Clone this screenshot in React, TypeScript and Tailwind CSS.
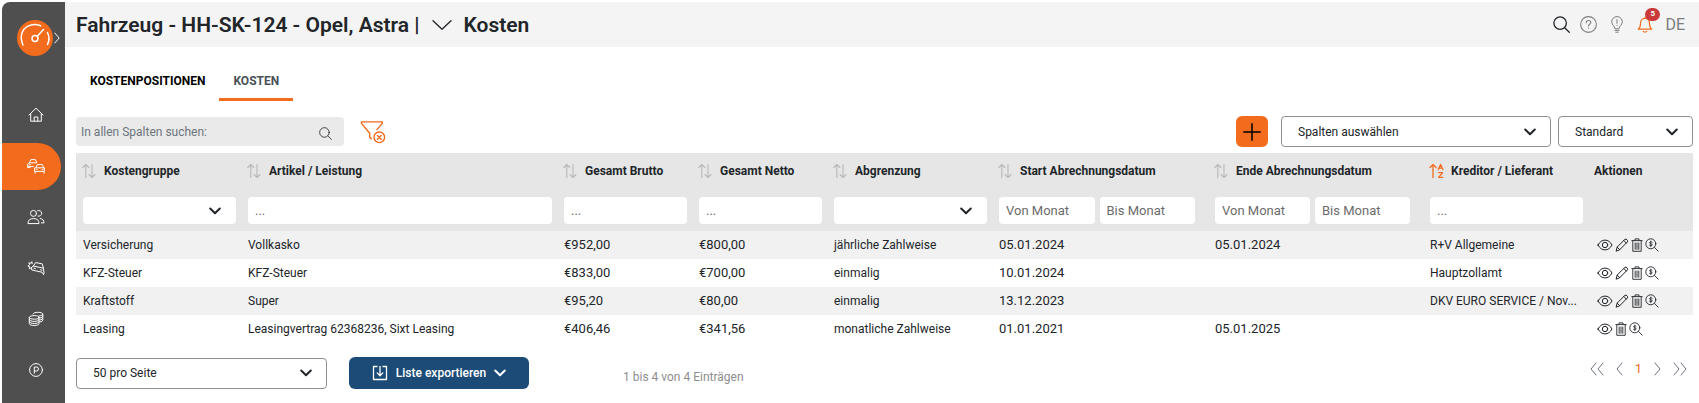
import type { ReactNode, SVGProps } from "react";
import clsx from "clsx";

function Icon({ children, ...props }: SVGProps<SVGSVGElement>) {
    return (
        <svg fill="none" stroke="currentColor" strokeLinecap="round" strokeLinejoin="round" aria-hidden="true" {...props}>
            {children}
        </svg>
    );
}

const HomeIcon = () => (
    <Icon viewBox="0 0 16 16" className="h-4 w-4">
        <path d="M1 8 8 1.2 15 8M2.7 6.6v7.6h10.6V6.6M6.2 14v-4h3.6v4" />
    </Icon>
);

const CarsIcon = () => (
    <Icon viewBox="0 0 18 16" className="h-4 w-[18px]">
        <path d="M2.5 4.800 3.8 1.600h4.600L9.600 4.300M.8 9.5V5.800l1.700-1H9.500M.8 8.400h5.700M1.200 9.600h2M2.500 6.600h.8" />
        <path d="M9 9.800 10.200 6.600h5.200l1.200 3.200M8 9.800h9.300v3.600H8zM8.200 13.600v1.600M17 13.600v1.600M9.600 11.600h.8M15 11.600h.8" />
    </Icon>
);

const UsersIcon = () => (
    <Icon viewBox="0 0 18 16" className="h-4 w-[18px]">
        <circle cx="6.5" cy="4.4" r="3" />
        <path d="M1 14.2c0-3.2 2-4.6 5.5-4.6s5.5 1.4 5.5 4.6zM10.6 1.7a2.9 2.9 0 1 1 .3 5.4M13.2 9.5c2.4.4 3.8 1.8 3.8 4.4h-2.6" />
    </Icon>
);

const DamageIcon = () => (
    <Icon viewBox="0 0 18 16" className="h-4 w-[18px]">
        <path d="m5.2 3.6-.4-2-1 1.8-2-.6.8 1.9L.9 6l1.8.8-.4 2 1.9-1" />
        <path d="M6.2 6.2 8.6 2.6l6.6 1.2 1.2 4M4.8 7.2 6.4 6l10 2.2.6 4.6-.4 1.800-1.6-2.400-9.8-2.100zM7 8.2l1.4.4M13.6 9.8l1.4.4" />
    </Icon>
);

const CoinsIcon = () => (
    <Icon viewBox="0 0 16 16" className="h-4 w-4">
        <ellipse cx="6.2" cy="6.4" rx="4.9" ry="1.8" />
        <path d="M1.3 6.4v6.2c0 1 2.2 1.9 4.9 1.9s4.9-.9 4.9-1.9V6.4M1.3 8.5c0 1 2.2 1.9 4.9 1.9s4.9-.9 4.9-1.9M1.3 10.6c0 1 2.2 1.9 4.9 1.9s4.9-.9 4.9-1.9" />
        <path d="M5 3c.3-1 2.3-1.7 4.9-1.7 2.7 0 4.9.8 4.9 1.8s-2 1.8-3.700 1.900M14.800 3.200v6c0 .8-1.200 1.400-2.600 1.700M14.800 5.200c0 .8-1.200 1.400-2.600 1.700M14.800 7.200c0 .8-1.200 1.400-2.600 1.700" />
    </Icon>
);

const ParkingIcon = () => (
    <Icon viewBox="0 0 16 16" className="h-4 w-4">
        <circle cx="8" cy="8" r="6.4" />
        <path d="M6.3 11.300V5h2.200a2 2 0 0 1 0 4H6.500" />
    </Icon>
);

const SearchIcon = ({ className, strokeWidth = 1 }: { className: string; strokeWidth?: number }) => (
    <Icon viewBox="0 0 16 16" className={className} strokeWidth={strokeWidth}>
        <circle cx="6.7" cy="6.7" r="5.9" />
        <path d="m11 11 4.3 4.3" />
    </Icon>
);

const HelpIcon = () => (
    <Icon viewBox="0 0 16 16" className="h-[17px] w-[17px]">
        <circle cx="8" cy="8" r="7.4" />
        <path d="M5.9 6.4C5.9 5 6.8 4.3 8 4.3s2.2.7 2.2 1.9c0 1.500-2.200 1.600-2.200 3.100M8 11.300v.2" />
    </Icon>
);

const BulbIcon = () => (
    <Icon viewBox="0 0 12 17" className="h-[17px] w-3">
        <path d="M4 12.400c0-2.400-3.300-3.300-3.300-6.500a5.300 5.300 0 0 1 10.600 0c0 3.200-3.300 4.100-3.300 6.500zM4 14.400h4M4.800 16.200h2.400M6 3.600v3.800M6 9.300v.2" />
    </Icon>
);

const BellIcon = () => (
    <Icon viewBox="0 0 16 17" className="h-[17px] w-4" strokeWidth="1.2">
        <path d="M8 1v1.400M1.200 13.200h13.600c-1.800-1.200-2.300-3-2.300-5.800 0-3-1.500-5-4.500-5s-4.500 2-4.500 5c0 2.800-.5 4.600-2.300 5.800zM6.200 15.300c.7 1.100 2.900 1.100 3.600 0" />
    </Icon>
);

const FilterResetIcon = () => (
    <Icon viewBox="0 0 26 24" className="h-6 w-[26px]" strokeWidth="1.4">
        <path d="M17 9.600 22.300 3.400V1.900H1.500v1.500l8.200 9.800v4.400l1.800 1.100" />
        <circle cx="19.300" cy="17.300" r="5.300" />
        <path d="m17.400 15.400 3.800 3.800M21.200 15.400l-3.800 3.800" />
    </Icon>
);

const SortIcon = () => (
    <Icon viewBox="0 0 14 16" className="h-4 w-3.5 text-[#b8b8b8]" strokeWidth="1.1">
        <path d="M3.800 14.500v-13M.8 4.500l3-3 3 3M10 1.500v13M7 11.500l3 3 3-3" />
    </Icon>
);

const SortAzIcon = () => (
    <Icon viewBox="0 0 16 16" className="h-4 w-4 text-[#f36b1c]" strokeWidth="1.3">
        <path d="M4 14.500v-13M1 4.500l3-3 3 3" />
        <path d="m9.300 6.600 2.300-5.200 2.300 5.200M10 5.100h3.200M9.600 9.600h4L9.600 14.300h4.200" />
    </Icon>
);

const EyeIcon = () => (
    <Icon viewBox="0 0 16 16" className="h-4 w-4">
        <path d="M1 8c1.800-3.300 4.100-4.900 7-4.900S13.200 4.700 15 8c-1.800 3.300-4.100 4.900-7 4.900S2.800 11.300 1 8z" />
        <circle cx="8" cy="8" r="2.700" />
    </Icon>
);

const PencilIcon = () => (
    <Icon viewBox="0 0 14 14" className="h-3.5 w-3.5">
        <path d="m1.200 12.800.9-3.700 7.800-7.700c1.300-1 3.500 1.100 2.500 2.500l-7.700 7.800zM8.800 2.500l2.500 2.600M2.200 9.200l2.500 2.500" />
    </Icon>
);

const TrashIcon = () => (
    <Icon viewBox="0 0 12 14" className="h-3.5 w-3" strokeWidth="0.9">
        <path d="M.8 2.600h10.400M4 2.400V.9h4v1.500M1.800 2.800v10.500h8.400V2.800M4.200 5v6.300M6 5v6.300M7.800 5v6.300" />
    </Icon>
);

const CostSearchIcon = () => (
    <Icon viewBox="0 0 14 14" className="h-3.5 w-3.5" strokeWidth="0.9">
        <circle cx="5.800" cy="5.800" r="5" />
        <path d="m9.500 9.500 3.700 3.700" />
        <path strokeWidth="0.800" d="M7.200 4.300c-.5-.6-2.700-.7-2.700.4 0 1.300 2.800.8 2.800 2.200 0 1.100-2.300 1.100-2.900.4M5.800 3.100v5.400" />
    </Icon>
);

const ExportIcon = () => (
    <Icon viewBox="0 0 16 16" className="h-4 w-4" strokeWidth="1.3">
        <path d="M5 1.500H1.500v13h13v-13H11M8 1.500v9M5.200 7.900 8 10.700l2.800-2.800" />
    </Icon>
);

const Caret = ({ className }: { className?: string }) => (
    <Icon viewBox="0 0 12 8" className={clsx("h-2 w-3", className)} strokeWidth="2">
        <path d="m1.200 1.500 4.800 4.700 4.800-4.700" />
    </Icon>
);

const Logo = () => (
    <Icon viewBox="0 0 36 36" className="h-9 w-9 shrink-0" strokeWidth="1.5" stroke="#fff">
        <circle cx="18" cy="18" r="18" fill="#f36b1c" stroke="none" />
        <path d="M6 25C2.500 17 4.500 9.500 11 6.200 15 4.200 19.500 4.200 23.500 5.700M30.500 12.500c2 4 2 8 0 12M20.500 16l6-6.500" />
        <circle cx="18" cy="18.500" r="3" />
    </Icon>
);

function SelectBox({ label, value, className, boxClass }: { label: string; value: string; className?: string; boxClass: string }) {
    return (
        <div className={clsx("relative", className)}>
            <select aria-label={label} className={clsx("block w-full appearance-none rounded bg-white outline-none", boxClass)}>
                <option>{value}</option>
            </select>
            <Caret className="pointer-events-none absolute inset-y-0 right-[15px] my-auto" />
        </div>
    );
}

function TextFilter({ label, placeholder = "..." }: { label: string; placeholder?: string }) {
    return (
        <input
            type="text"
            aria-label={label}
            placeholder={placeholder}
            className="block h-[27px] w-full min-w-0 rounded bg-white px-[7px] text-[13px] outline-none placeholder:text-[#6c6c6c]"
        />
    );
}

const FILTER_SELECT = "h-[27px]";
const OUTLINED_SELECT = "h-[31px] border border-[#8f8f8f] px-4";

const navItems: { label: string; icon: ReactNode; active?: boolean }[] = [
    { label: "Start", icon: <HomeIcon /> },
    { label: "Fahrzeuge", icon: <CarsIcon />, active: true },
    { label: "Fahrer", icon: <UsersIcon /> },
    { label: "Schäden", icon: <DamageIcon /> },
    { label: "Kosten", icon: <CoinsIcon /> },
    { label: "Parken", icon: <ParkingIcon /> },
];

const columns: { title: string; filter: "select" | "text" | "range"; width: string; sorted?: boolean; numeric?: boolean }[] = [
    { title: "Kostengruppe", filter: "select", width: "w-[165px]" },
    { title: "Artikel / Leistung", filter: "text", width: "w-auto" },
    { title: "Gesamt Brutto", filter: "text", width: "w-[135px]", numeric: true },
    { title: "Gesamt Netto", filter: "text", width: "w-[135px]", numeric: true },
    { title: "Abgrenzung", filter: "select", width: "w-[165px]" },
    { title: "Start Abrechnungsdatum", filter: "range", width: "w-[216px]", numeric: true },
    { title: "Ende Abrechnungsdatum", filter: "range", width: "w-[215px]", numeric: true },
    { title: "Kreditor / Lieferant", filter: "text", width: "w-[165px]", sorted: true },
];

const rows = [
    { cells: ["Versicherung", "Vollkasko", "€952,00", "€800,00", "jährliche Zahlweise", "05.01.2024", "05.01.2024", "R+V Allgemeine"], editable: true },
    { cells: ["KFZ-Steuer", "KFZ-Steuer", "€833,00", "€700,00", "einmalig", "10.01.2024", "", "Hauptzollamt"], editable: true },
    { cells: ["Kraftstoff", "Super", "€95,20", "€80,00", "einmalig", "13.12.2023", "", "DKV EURO SERVICE / Nov..."], editable: true },
    { cells: ["Leasing", "Leasingvertrag 62368236, Sixt Leasing", "€406,46", "€341,56", "monatliche Zahlweise", "01.01.2021", "05.01.2025", ""], editable: false },
];

function Sidebar() {
    return (
        <aside className="w-[63px] shrink-0 rounded-tl-lg bg-[#4f4f4f] text-white">
            <div className="flex items-center gap-px pt-[18px] pl-[15px]">
                <Logo />
                <button type="button" aria-label="Menü ausklappen">
                    <Icon viewBox="0 0 6 12" className="h-3 w-1.5">
                        <path d="m.8 1 4.400 5-4.400 5" />
                    </Icon>
                </button>
            </div>
            <nav className="mt-9 flex flex-col gap-1">
                {navItems.map((item) => (
                    <a
                        key={item.label}
                        href="#"
                        aria-label={item.label}
                        className={clsx("mr-1 flex h-[47px] items-center justify-center rounded-r-full pb-0.5 pl-2", item.active && "bg-[#f36b1c]")}
                    >
                        {item.icon}
                    </a>
                ))}
            </nav>
        </aside>
    );
}

function Header() {
    return (
        <header className="flex h-[45px] items-center justify-between bg-[#f4f4f4] pr-3.5 pl-[11px]">
            <h1 className="flex items-center text-[21px] font-semibold">
                Fahrzeug - HH-SK-124 - Opel, Astra |
                <button type="button" aria-label="Fahrzeug wechseln" className="mx-3">
                    <Icon viewBox="0 0 20 10" className="h-2.5 w-5" strokeWidth="1.3">
                        <path d="m1 .8 9 8.400 9-8.400" />
                    </Icon>
                </button>
                Kosten
            </h1>
            <div className="flex items-center text-[#7d7d7d]">
                <button type="button" aria-label="Suchen" className="mr-2.5 text-[#212529]">
                    <SearchIcon className="h-[17px] w-[17px]" strokeWidth={1.2} />
                </button>
                <button type="button" aria-label="Hilfe" className="mr-3.5">
                    <HelpIcon />
                </button>
                <button type="button" aria-label="Neuigkeiten" className="mr-3.5">
                    <BulbIcon />
                </button>
                <button type="button" aria-label="Benachrichtigungen" className="relative mr-3 text-[#f36b1c]">
                    <BellIcon />
                    <span className="absolute -top-2 left-2 flex h-[13px] w-[15px] items-center justify-center rounded-full bg-[#cb3a3a] text-[8px] font-bold text-white">
                        5
                    </span>
                </button>
                <button type="button" className="text-base">DE</button>
            </div>
        </header>
    );
}

function CostTable() {
    return (
        <table className="w-full table-fixed border-collapse text-left">
            <thead className="bg-[#e6e6e6]">
                <tr className="h-9">
                    {columns.map((col) => (
                        <th key={col.title} scope="col" className={clsx("p-0 pl-1.5 font-bold", col.width)}>
                            <div className="flex items-center">
                                <button type="button" aria-label={`${col.title} sortieren`} className="w-[22px]">
                                    {col.sorted ? <SortAzIcon /> : <SortIcon />}
                                </button>
                                {col.title}
                            </div>
                        </th>
                    ))}
                    <th scope="col" className="w-[105px] p-0 pl-1.5 font-bold">Aktionen</th>
                </tr>
                <tr className="h-[42px]">
                    {columns.map((col) => (
                        <td key={col.title} className="p-0 pt-2 pr-[5px] pl-[7px] align-top">
                            {col.filter === "select" && <SelectBox label={col.title} value="" boxClass={FILTER_SELECT} />}
                            {col.filter === "text" && <TextFilter label={col.title} />}
                            {col.filter === "range" && (
                                <div className="mr-2 flex gap-[5px]">
                                    <TextFilter label={`${col.title} von`} placeholder="Von Monat" />
                                    <TextFilter label={`${col.title} bis`} placeholder="Bis Monat" />
                                </div>
                            )}
                        </td>
                    ))}
                    <td />
                </tr>
            </thead>
            <tbody>
                {rows.map((row) => (
                    <tr key={row.cells[0]} className="h-7 odd:bg-[#f1f1f1]">
                        {row.cells.map((cell, i) => (
                            <td key={i} className={clsx("truncate p-0 pl-[7px]", columns[i].numeric && "text-[13px]")}>{cell}</td>
                        ))}
                        <td className="p-0 pl-[9px]">
                            <div className="flex items-center gap-0.5">
                                <button type="button" aria-label="Anzeigen"><EyeIcon /></button>
                                {row.editable && <button type="button" aria-label="Bearbeiten"><PencilIcon /></button>}
                                <button type="button" aria-label="Löschen"><TrashIcon /></button>
                                <button type="button" aria-label="Kostendetails"><CostSearchIcon /></button>
                            </div>
                        </td>
                    </tr>
                ))}
            </tbody>
        </table>
    );
}

function Pagination() {
    return (
        <nav aria-label="Seiten" className="mr-1.5 mb-2 ml-auto flex items-center gap-3 text-[#6b7280]">
            <button type="button" aria-label="Erste Seite">
                <Icon viewBox="0 0 14 14" className="h-3.5 w-3.5"><path d="M6 1 1 7l5 6M13 1 8 7l5 6" /></Icon>
            </button>
            <button type="button" aria-label="Vorherige Seite">
                <Icon viewBox="0 0 7 14" className="h-3.5 w-[7px]"><path d="M6 1 1 7l5 6" /></Icon>
            </button>
            <button type="button" aria-current="page" className="text-[13px] text-[#f36b1c]">1</button>
            <button type="button" aria-label="Nächste Seite">
                <Icon viewBox="0 0 7 14" className="h-3.5 w-[7px]"><path d="m1 1 5 6-5 6" /></Icon>
            </button>
            <button type="button" aria-label="Letzte Seite">
                <Icon viewBox="0 0 14 14" className="h-3.5 w-3.5"><path d="m1 1 5 6-5 6M8 1l5 6-5 6" /></Icon>
            </button>
        </nav>
    );
}

export default function App() {
    return (
        <div className="flex min-h-screen bg-white pt-0.5 pl-0.5 font-['Roboto',sans-serif] text-xs text-[#212529]">
            <Sidebar />
            <div className="min-w-0 flex-1">
                <Header />
                <main className="pr-1.5 pl-[11px]">
                    <div className="mt-4 flex h-[38px] font-bold">
                        <a href="#" className="flex items-center px-3.5 pb-[3px] text-black">KOSTENPOSITIONEN</a>
                        <a href="#" aria-current="page" className="flex items-center border-b-3 border-[#f36b1c] px-3.5 text-[#495057]">
                            KOSTEN
                        </a>
                    </div>

                    <div className="mt-[15px] flex items-center">
                        <div className="relative w-[268px]">
                            <input
                                type="text"
                                aria-label="In allen Spalten suchen"
                                placeholder="In allen Spalten suchen:"
                                className="block h-[29px] w-full rounded-sm bg-[#eaeaea] pr-9 pl-[5px] outline-none placeholder:text-[#6c757d]"
                            />
                            <SearchIcon className="pointer-events-none absolute top-2.5 right-3 h-[13px] w-[13px]" />
                        </div>
                        <button type="button" aria-label="Filter zurücksetzen" className="ml-4 text-[#f36b1c]">
                            <FilterResetIcon />
                        </button>
                        <button type="button" aria-label="Neu" className="mr-[13px] ml-auto flex h-[31px] w-8 items-center justify-center rounded-md bg-[#f36b1c] text-black">
                            <Icon viewBox="0 0 18 18" className="h-[18px] w-[18px]" strokeWidth="1.5">
                                <path d="M9 .8v16.400M.8 9h16.400" />
                            </Icon>
                        </button>
                        <SelectBox label="Spalten" value="Spalten auswählen" className="mr-[7px] w-[270px]" boxClass={OUTLINED_SELECT} />
                        <SelectBox label="Ansicht" value="Standard" className="w-[135px]" boxClass={OUTLINED_SELECT} />
                    </div>

                    <div className="mt-1.5">
                        <CostTable />
                    </div>

                    <div className="mt-3.5 flex items-center">
                        <SelectBox label="Einträge pro Seite" value="50 pro Seite" className="w-[251px]" boxClass={OUTLINED_SELECT} />
                        <button type="button" className="ml-[22px] flex h-8 w-[180px] items-center justify-center gap-2 rounded-md bg-[#1b4b76] font-medium text-white">
                            <ExportIcon />
                            Liste exportieren
                            <Caret />
                        </button>
                        <p className="mt-2 ml-[94px] text-[#8e8e8e]">1 bis 4 von 4 Einträgen</p>
                        <Pagination />
                    </div>
                </main>
            </div>
        </div>
    );
}
